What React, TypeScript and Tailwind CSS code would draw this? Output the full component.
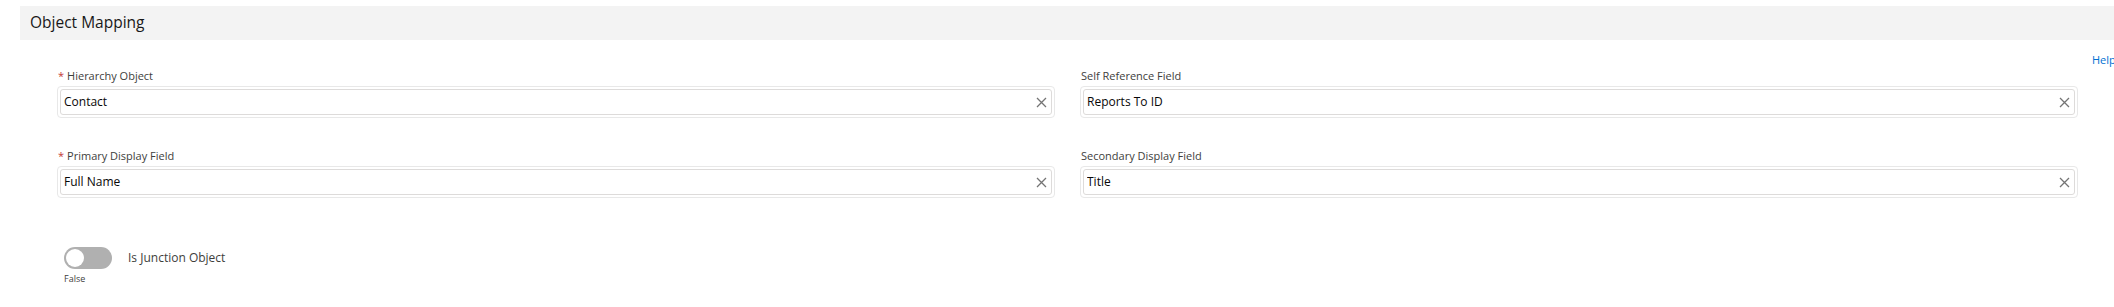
import React from 'react';

const font = { fontFamily: '"Open Sans", "Noto Sans", Arial, sans-serif' };

type FieldProps = { label: string; value: string; required?: boolean };

const Field: React.FC<FieldProps> = ({ label, value, required }) => (
  <div className="flex flex-col">
    <label className="h-4 flex items-center text-[11px] leading-4 text-[#3e3e3c] pl-px">
      {required && <span className="text-[#c23934] mr-[3px]">*</span>}
      {label}
    </label>
    <div className="mt-[2px] border border-[#e8e8e8] rounded-[4px] p-[2px]">
      <div className="h-[26px] border border-[#dddbda] rounded-[3px] flex items-center pl-[3px] pr-[4px]">
        <span className="flex-1 text-[12px] text-[#080707] truncate">{value}</span>
        <svg width="11" height="11" viewBox="0 0 11 11" className="shrink-0">
          <path d="M1 1 L10 10 M10 1 L1 10" stroke="#747474" strokeWidth="1.3" />
        </svg>
      </div>
    </div>
  </div>
);

export default function App() {
  return (
    <div className="w-[2114px] h-[307px] bg-white overflow-hidden" style={font}>
      <div className="pt-[6px] pl-[20px]">
        <div className="h-[34px] bg-[#f3f3f3] flex items-center pl-[10px]">
          <h2 className="text-[15.5px] text-[#181818]">Object Mapping</h2>
        </div>
      </div>

      <div className="pl-[57px] pr-[36px]">
        <div className="mt-[12px] h-4 flex justify-end mr-[-36px]">
          <a className="text-[11px] leading-4 text-[#0070d2] w-[22px]">Help</a>
        </div>

        <div className="grid grid-cols-2 gap-x-[25px] gap-y-[30px]">
          <Field required label="Hierarchy Object" value="Contact" />
          <Field label="Self Reference Field" value="Reports To ID" />
          <Field required label="Primary Display Field" value="Full Name" />
          <Field label="Secondary Display Field" value="Title" />
        </div>

        <div className="mt-[49px] flex items-start gap-[17px]">
          <div className="flex flex-col items-start w-[48px] pl-[7px]">
            <div className="w-[48px] h-[22px] rounded-full bg-[#b0b0b0] flex items-center pl-[2px]">
              <div className="w-[18px] h-[18px] rounded-full bg-white" />
            </div>
            <span className="text-[9px] leading-3 text-[#3e3e3c] mt-[4px]">False</span>
          </div>
          <span className="text-[12px] leading-[22px] text-[#3e3e3c] ml-[6px]">Is Junction Object</span>
        </div>
      </div>
    </div>
  );
}
